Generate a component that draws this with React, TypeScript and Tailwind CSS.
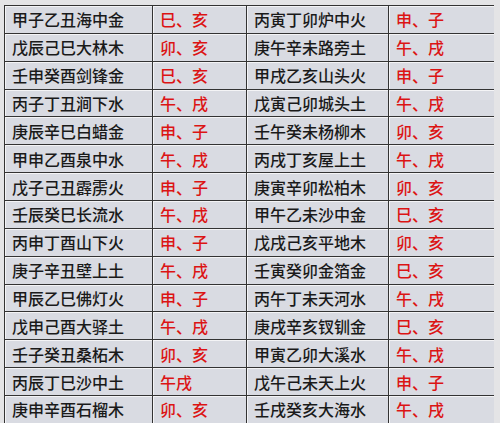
import React from 'react';

const rows: [string, string, string, string][] = [
  ['甲子乙丑海中金', '巳、亥', '丙寅丁卯炉中火', '申、子'],
  ['戊辰己巳大林木', '卯、亥', '庚午辛未路旁土', '午、戌'],
  ['壬申癸酉剑锋金', '巳、亥', '甲戌乙亥山头火', '申、子'],
  ['丙子丁丑涧下水', '午、戌', '戊寅己卯城头土', '午、戌'],
  ['庚辰辛巳白蜡金', '申、子', '壬午癸未杨柳木', '卯、亥'],
  ['甲申乙酉泉中水', '午、戌', '丙戌丁亥屋上土', '午、戌'],
  ['戊子己丑霹雳火', '申、子', '庚寅辛卯松柏木', '卯、亥'],
  ['壬辰癸巳长流水', '午、戌', '甲午乙未沙中金', '巳、亥'],
  ['丙申丁酉山下火', '申、子', '戊戌己亥平地木', '卯、亥'],
  ['庚子辛丑壁上土', '午、戌', '壬寅癸卯金箔金', '巳、亥'],
  ['甲辰乙巳佛灯火', '申、子', '丙午丁未天河水', '午、戌'],
  ['戊申己酉大驿土', '午、戌', '庚戌辛亥钗钏金', '巳、亥'],
  ['壬子癸丑桑柘木', '卯、亥', '甲寅乙卯大溪水', '午、戌'],
  ['丙辰丁巳沙中土', '午戌', '戊午己未天上火', '申、子'],
  ['庚申辛酉石榴木', '卯、亥', '壬戌癸亥大海水', '午、戌'],
];

const cell =
  'flex items-center border-l border-t border-[#333] bg-[#d9dbe2] shadow-[inset_1px_1px_0_#f4f4f6] h-[27.86px] pl-[7px] text-[16px] font-medium leading-none whitespace-nowrap';

export default function App() {
  return (
    <div
      className="h-[423px] w-[500px] overflow-hidden bg-[#e4e4e6] pl-[4px] pt-[5px]"
      style={{ fontFamily: '"Noto Sans CJK SC", "Noto Sans", sans-serif' }}
    >
      <div className="grid w-[490px] grid-cols-[148px_94px_142px_106px] border-r border-[#333]">
        {rows.map((r, i) => (
          <React.Fragment key={i}>
            <div className={cell + ' text-[#1a1a1a]'}>{r[0]}</div>
            <div className={cell + ' text-[#dc1414]'}>{r[1]}</div>
            <div className={cell + ' text-[#1a1a1a]'}>{r[2]}</div>
            <div className={cell + ' text-[#dc1414]'}>{r[3]}</div>
          </React.Fragment>
        ))}
      </div>
    </div>
  );
}
